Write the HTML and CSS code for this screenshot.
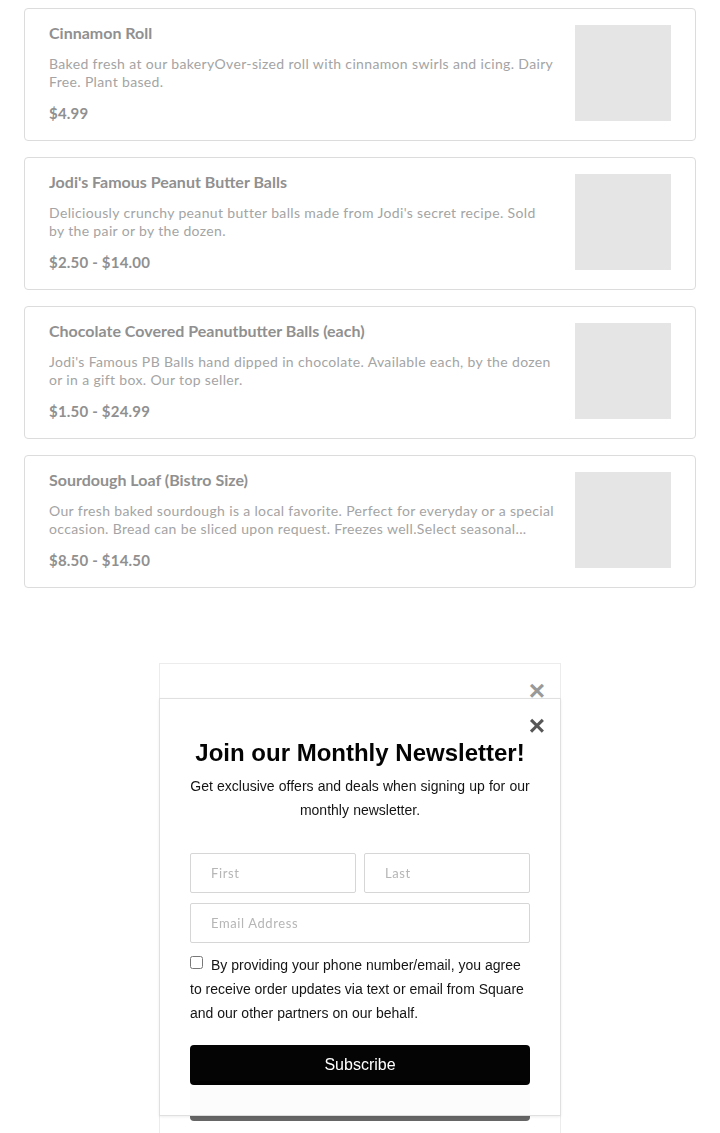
FILE: index.html
```html
<!DOCTYPE html>
<html>
<head>
  <meta charset="UTF-8">
  <title>Menu</title>
  <link rel="stylesheet" href="styles.css">
</head>
<body>
  <div class="item-list">
    <div class="item-card">
      <div class="item-text">
        <div class="item-title">Cinnamon Roll</div>
        <div class="item-desc">Baked fresh at our bakeryOver-sized roll with cinnamon swirls and icing. Dairy Free. Plant based.</div>
        <div class="item-price">$4.99</div>
      </div>
      <div class="item-image"></div>
    </div>
    <div class="item-card">
      <div class="item-text">
        <div class="item-title">Jodi's Famous Peanut Butter Balls</div>
        <div class="item-desc">Deliciously crunchy peanut butter balls made from Jodi's secret recipe. Sold by the pair or by the dozen.</div>
        <div class="item-price">$2.50 - $14.00</div>
      </div>
      <div class="item-image"></div>
    </div>
    <div class="item-card">
      <div class="item-text">
        <div class="item-title">Chocolate Covered Peanutbutter Balls (each)</div>
        <div class="item-desc">Jodi's Famous PB Balls hand dipped in chocolate. Available each, by the dozen or in a gift box. Our top seller.</div>
        <div class="item-price">$1.50 - $24.99</div>
      </div>
      <div class="item-image"></div>
    </div>
    <div class="item-card">
      <div class="item-text">
        <div class="item-title">Sourdough Loaf (Bistro Size)</div>
        <div class="item-desc">Our fresh baked sourdough is a local favorite. Perfect for everyday or a special occasion. Bread can be sliced upon request. Freezes well.Select seasonal...</div>
        <div class="item-price">$8.50 - $14.50</div>
      </div>
      <div class="item-image"></div>
    </div>
  </div>

  <!-- popup fading out behind -->
  <div class="popup popup-back">
    <span class="popup-close">&times;</span>
    <h2 class="popup-title">Join our Monthly Newsletter!</h2>
    <button class="popup-button popup-button-back" type="button">Subscribe</button>
  </div>

  <!-- The newsletter popup -->
  <div class="popup popup-front">
    <span class="popup-close">&times;</span>
    <h2 class="popup-title">Join our Monthly Newsletter!</h2>
    <p class="popup-text">Get exclusive offers and deals when signing up for our monthly newsletter.</p>
    <form class="popup-form">
      <div class="name-row">
        <input type="text" placeholder="First">
        <input type="text" placeholder="Last">
      </div>
      <input type="text" placeholder="Email Address">
      <label class="consent">
        <input type="checkbox">By providing your phone number/email, you agree to receive order updates via text or email from Square and our other partners on our behalf.
      </label>
      <button class="popup-button" type="submit">Subscribe</button>
    </form>
  </div>
</body>
</html>
```

FILE: styles.css
```css
body {
  margin: 0;
  background-color: #ffffff;
  font-family: Lato, "Liberation Sans", sans-serif;
}

.item-list {
  display: flex;
  flex-direction: column;
  gap: 16px;
  padding: 8px 24px;
}

.item-card {
  display: flex;
  gap: 20.5px;
  padding: 16px 24px;
  border: 1px solid #dcdcdc;
  border-radius: 4px;
}

.item-text {
  flex: 1;
}

.item-title {
  font-size: 16px;
  line-height: 16px;
  font-weight: 700;
  color: #909090;
}

.item-desc {
  margin-top: 14px;
  font-size: 14px;
  line-height: 18px;
  letter-spacing: 0.35px;
  color: #a4a4a4;
  display: -webkit-box;
  -webkit-line-clamp: 2;
  -webkit-box-orient: vertical;
  overflow: hidden;
}

.item-price {
  margin-top: 12px;
  font-size: 15px;
  line-height: 21px;
  font-weight: 700;
  letter-spacing: 0.2px;
  color: #909090;
}

.item-image {
  width: 96px;
  height: 96px;
  background-color: #e5e5e5;
  flex-shrink: 0;
}

/* newsletter popups */
.popup {
  position: fixed;
  left: 159px;
  width: 402px;
  box-sizing: border-box;
  padding: 40px 30px 30px;
  background-color: #ffffff;
  border: 1px solid #e0e0e0;
  font-family: "Liberation Sans", Arial, sans-serif;
  text-align: center;
}

.popup-back {
  top: 663px;
  height: 520px;
  opacity: 0.6;
}

.popup-back .popup-title {
  color: #e4e4e4;
}

.popup-front {
  top: 698px;
  opacity: 0.985;
  box-shadow: 0 1px 3px rgba(0,0,0,0.08);
}

.popup-close {
  position: absolute;
  top: 13px;
  right: 15px;
  font-size: 28px;
  line-height: 28px;
  font-weight: bold;
  color: #555555;
}

.popup-title {
  margin: 0;
  font-size: 24px;
  line-height: 28px;
  font-weight: bold;
  color: #000000;
}

.popup-text {
  margin: 7px 0 0;
  font-size: 14px;
  line-height: 24px;
  word-spacing: 0.3px;
  color: #111111;
}

.popup-form {
  display: flex;
  flex-direction: column;
  gap: 10px;
  margin-top: 31px;
}

.name-row {
  display: flex;
  gap: 8px;
}

.popup-form input[type="text"] {
  height: 40px;
  box-sizing: border-box;
  padding: 0 20px;
  border: 1px solid #d6d6d6;
  border-radius: 2px;
  font-family: Lato, sans-serif;
  font-size: 13px;
  letter-spacing: 0.6px;
}

.name-row input[type="text"] {
  flex: 1;
  min-width: 0;
}

.popup-form input::placeholder {
  color: #b5b5b5;
}

.consent {
  text-align: left;
  font-size: 14px;
  line-height: 24px;
  color: #111111;
}

.consent input {
  margin: 0 8px 0 0;
  width: 13px;
  height: 13px;
  vertical-align: 1px;
}

.popup-button {
  height: 40px;
  margin-top: 10px;
  border: none;
  border-radius: 4px;
  background-color: #000000;
  color: #ffffff;
  font-family: "Liberation Sans", Arial, sans-serif;
  font-size: 16px;
}

.popup-button-back {
  width: 100%;
  margin-top: 349px;
  color: #000000;
}
```
